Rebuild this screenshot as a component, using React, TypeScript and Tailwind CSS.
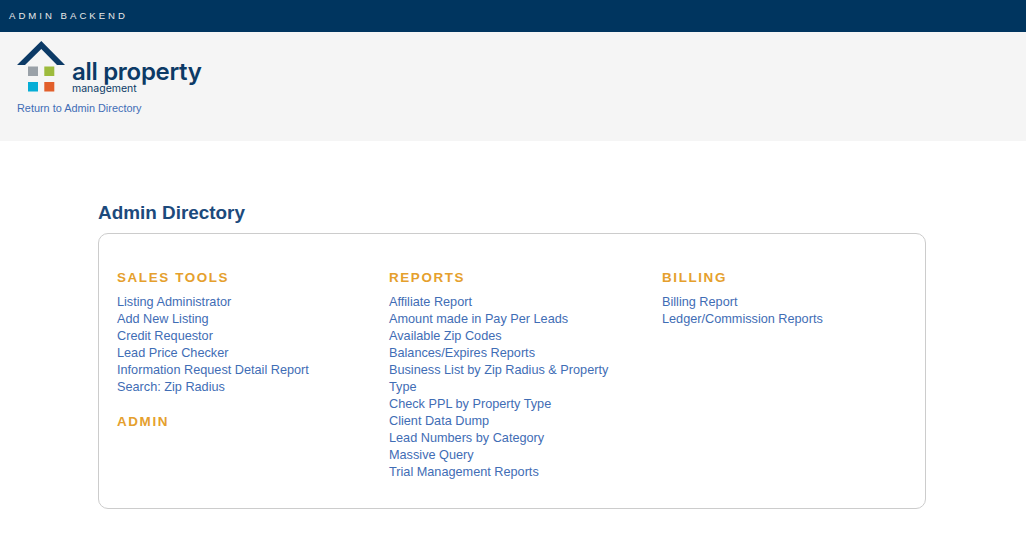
const font = { fontFamily: '"Liberation Sans", Arial, sans-serif' };

function Section({ title, links, className = "" }: { title: string; links: string[]; className?: string }) {
  return (
    <div className={className}>
      <h2 className="text-[13.44px] leading-[17px] font-bold tracking-[1.6px] text-[#e5a02d]">{title}</h2>
      {links.length > 0 && (
        <ul className="mt-[8px]">
          {links.map((l) => (
            <li key={l} className="text-[12.7px] leading-[17px] text-[#3f6db5]">
              <a href="#">{l}</a>
            </li>
          ))}
        </ul>
      )}
    </div>
  );
}

function Logo() {
  return (
    <div className="flex items-start">
      <svg width="49" height="52" viewBox="0 0 49 52" className="shrink-0">
        <path d="M0 24 L24.3 0 L48 24 L40 24 L24.3 8 L8 24 Z" fill="#0c3a66" />
        <rect x="11" y="25.5" width="10" height="9.5" fill="#9aa1a8" />
        <rect x="27.3" y="25.5" width="10" height="9.5" fill="#9dbb3d" />
        <rect x="11" y="41" width="10" height="9.5" fill="#06add6" />
        <rect x="27.3" y="41" width="10" height="9.5" fill="#e25f2b" />
      </svg>
      <div className="ml-[6px] mt-[20px] text-[#0c3a66]" style={{ fontFamily: 'Inter, sans-serif' }}>
        <div className="text-[24px] leading-[22px] font-semibold tracking-[-0.3px]">all property</div>
        <div className="text-[10.5px] leading-[11px]">management</div>
      </div>
    </div>
  );
}

export default function App() {
  return (
    <div className="min-h-[545px] bg-white" style={font}>
      <div className="h-8 bg-[#00355f] flex items-center pl-[9px] text-[9.6px] tracking-[3px] text-[#e8e8e8]">
        ADMIN BACKEND
      </div>
      <div className="h-[109px] bg-[#f5f5f5] pl-[17px] pt-[9px]">
        <Logo />
        <a href="#" className="block mt-[8px] text-[10.88px] leading-[13px] text-[#3f6db5]">
          Return to Admin Directory
        </a>
      </div>
      <div className="ml-[98px] w-[828px] pt-[61px]">
        <h1 className="text-[18.9px] leading-[22px] font-bold text-[#1c4a7c]">Admin Directory</h1>
        <div className="mt-[9px] h-[276px] border border-[#cccccc] rounded-[10px] pt-[35px] pl-[18px] flex">
          <div className="w-[272px]">
            <Section
              title="SALES TOOLS"
              links={[
                "Listing Administrator",
                "Add New Listing",
                "Credit Requestor",
                "Lead Price Checker",
                "Information Request Detail Report",
                "Search: Zip Radius",
              ]}
            />
            <Section title="ADMIN" links={[]} className="mt-[17px]" />
          </div>
          <div className="w-[273px] pr-[30px]">
            <Section
              title="REPORTS"
              links={[
                "Affiliate Report",
                "Amount made in Pay Per Leads",
                "Available Zip Codes",
                "Balances/Expires Reports",
                "Business List by Zip Radius & Property Type",
                "Check PPL by Property Type",
                "Client Data Dump",
                "Lead Numbers by Category",
                "Massive Query",
                "Trial Management Reports",
              ]}
            />
          </div>
          <div className="w-[240px]">
            <Section title="BILLING" links={["Billing Report", "Ledger/Commission Reports"]} />
          </div>
        </div>
      </div>
    </div>
  );
}
